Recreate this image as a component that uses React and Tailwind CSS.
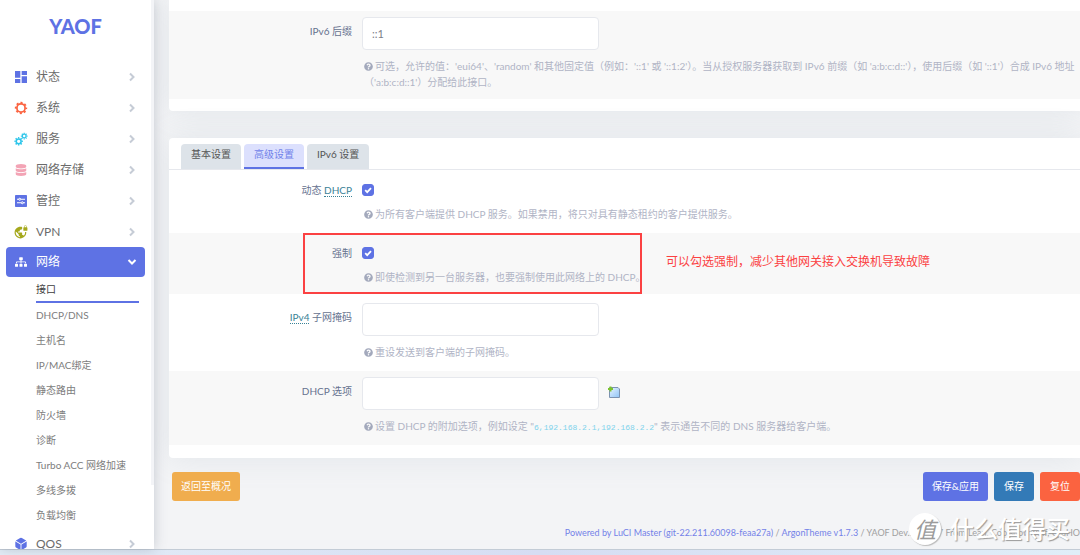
import React, { useState } from 'react';
import { MdDashboard, MdVpnLock } from 'react-icons/md';
import { FaDatabase, FaQuestionCircle, FaSitemap } from 'react-icons/fa';
import { IoCube } from 'react-icons/io5';

const Gear = ({ cx, cy, r, width }) => (
  <>
    <circle cx={cx} cy={cy} r={r} fill="none" stroke="currentColor" strokeWidth={width} />
    <circle
      cx={cx}
      cy={cy}
      r={r + width * 0.7}
      fill="none"
      stroke="currentColor"
      strokeWidth={width}
      pathLength="16"
      strokeDasharray="1 1"
      strokeDashoffset="0.5"
    />
  </>
);

const GearIcon = ({ className }) => (
  <svg viewBox="0 0 24 24" className={className} aria-hidden="true">
    <Gear cx={12} cy={12} r={7} width={3} />
  </svg>
);

const GearsIcon = ({ className }) => (
  <svg viewBox="0 0 24 24" className={className} aria-hidden="true">
    <Gear cx={8} cy={16} r={4.2} width={2.6} />
    <Gear cx={17.5} cy={7} r={3.2} width={2.2} />
  </svg>
);

const ControlIcon = ({ className }) => (
  <svg viewBox="0 0 24 24" className={className} aria-hidden="true">
    <rect width="24" height="24" rx="1.5" fill="currentColor" />
    <path d="M4 8.5h4M12 8.5h8M4 15.5h8M16 15.5h4" stroke="#fff" strokeWidth="2" />
    <circle cx="9.5" cy="8.5" r="2" fill="none" stroke="#fff" strokeWidth="2" />
    <circle cx="14.5" cy="15.5" r="2" fill="none" stroke="#fff" strokeWidth="2" />
  </svg>
);

const Chevron = ({ className }) => (
  <svg viewBox="0 0 10 10" className={`size-[10px] shrink-0 ${className}`} aria-hidden="true">
    <path d="M3 1.5L6.5 5L3 8.5" fill="none" stroke="currentColor" strokeWidth="2" />
  </svg>
);

const AddFileIcon = () => (
  <svg viewBox="0 0 12 12" className="size-3" aria-hidden="true">
    <defs>
      <linearGradient id="sheet" x1="0" y1="0" x2="1" y2="1">
        <stop offset="0" stopColor="#e8f4ff" />
        <stop offset="1" stopColor="#8fc3f5" />
      </linearGradient>
    </defs>
    <path d="M1.5 1.5H10L11.5 3V11.5H1.5Z" fill="url(#sheet)" stroke="#7c92b0" />
    <path d="M0 3H5M2.5 .5V5.5" stroke="#7cc32e" strokeWidth="2" />
  </svg>
);

const menu = [
  { label: '状态', icon: MdDashboard, color: 'text-[#5e72e4]', size: 'size-4' },
  { label: '系统', icon: GearIcon, color: 'text-[#fb6340]', size: 'size-[14px]' },
  { label: '服务', icon: GearsIcon, color: 'text-[#2dc5ea]', size: 'size-[14px]' },
  { label: '网络存储', icon: FaDatabase, color: 'text-[#f3a4b5]', size: 'size-3' },
  { label: '管控', icon: ControlIcon, color: 'text-[#5e72e4]', size: 'size-3' },
  { label: 'VPN', icon: MdVpnLock, color: 'text-[#a5a81c]', size: 'size-[14px]' },
];

const submenu = ['接口', 'DHCP/DNS', '主机名', 'IP/MAC绑定', '静态路由', '防火墙', '诊断', 'Turbo ACC 网络加速', '多线多拨', '负载均衡'];

const tabs = ['基本设置', '高级设置', 'IPv6 设置'];

const MenuItem = ({ item }) => {
  const Icon = item.icon;
  return (
    <a href="#" className="flex h-[31px] items-center px-2 text-[#6b6b6b]">
      <span className={`flex w-[14px] justify-center ${item.color}`}>
        <Icon className={`shrink-0 ${item.size}`} />
      </span>
      <span className="ml-2 flex-1 text-xs">{item.label}</span>
      <Chevron className="text-[#c6ccd6]" />
    </a>
  );
};

const Sidebar = () => (
  <aside className="relative z-10 flex w-[154px] shrink-0 overflow-hidden bg-white shadow-[0_0_12px_rgba(90,100,120,0.3)]">
    <nav className="min-w-0 flex-1 px-[6px]">
      <a href="#" className="flex h-[61px] items-center justify-center pb-[10px] font-['Lato'] text-[20px] font-black text-[#5e72e4]">
        YAOF
      </a>
      {menu.map((item) => (
        <MenuItem key={item.label} item={item} />
      ))}
      <a href="#" className="flex h-[30px] items-center rounded-[4px] bg-[#5e72e4] px-2 text-white">
        <span className="flex w-[14px] justify-center">
          <FaSitemap className="size-3" />
        </span>
        <span className="ml-2 flex-1 text-xs">网络</span>
        <Chevron className="rotate-90" />
      </a>
      <ul className="pr-[6px] pl-[30px] text-[10px]">
        {submenu.map((name, i) => (
          <li key={name}>
            {i === 0 ? (
              <a href="#" className="flex h-[26px] items-center border-b-2 border-[#5e72e4] whitespace-nowrap text-[#3d3d3d]">{name}</a>
            ) : (
              <a href="#" className="flex h-[25px] items-center whitespace-nowrap text-[#7d7d7d]">{name}</a>
            )}
          </li>
        ))}
      </ul>
      <MenuItem item={{ label: 'QOS', icon: IoCube, color: 'text-[#5e72e4]', size: 'size-[14px]' }} />
    </nav>
    <div className="mb-16 w-[3px] bg-[#f3f4f7]" />
  </aside>
);

const Row = ({ label, htmlFor, help, striped, check, overlay, children }) => (
  <div className={`relative flex ${striped ? 'bg-[#f8f8f8] pb-[9px]' : 'pb-[11px]'} ${!striped && !check ? 'pt-[3px]' : ''}`}>
    <label htmlFor={htmlFor} className="mt-3 w-[183px] shrink-0 text-right text-[10px] leading-4 text-[#66728f]">
      {label}
    </label>
    <div className={`ml-[10px] min-w-0 flex-1 ${check ? 'pt-[14px]' : 'pt-[6px]'}`}>
      {children}
      <p className={`pl-[2px] text-[10px] leading-4 text-[#b0b4c5] ${check ? 'mt-[10px]' : 'mt-2'}`}>
        <FaQuestionCircle className="mr-[2px] inline size-[9px] -translate-y-px text-[#a3a9bc]" />
        {help}
      </p>
    </div>
    {overlay}
  </div>
);

const TextField = ({ id, value }) => (
  <input
    id={id}
    type="text"
    defaultValue={value}
    className="h-[33px] w-[237px] rounded-[4px] border border-[#e6e8ed] bg-white px-[9px] text-[11px] text-[#7c8089]"
  />
);

const CheckField = ({ id }) => (
  <span className="relative flex size-3">
    <input
      id={id}
      type="checkbox"
      defaultChecked
      className="peer size-3 appearance-none rounded-[3px] border border-[#5e72e4] checked:bg-[#5e72e4]"
    />
    <svg viewBox="0 0 12 12" className="pointer-events-none absolute inset-0 size-3 opacity-0 peer-checked:opacity-100" aria-hidden="true">
      <path d="M3.2 6.2L5.2 8.2L9 4.2" fill="none" stroke="#fff" strokeWidth="1.8" />
    </svg>
  </span>
);

const Abbr = ({ children }) => (
  <span className="border-b border-dotted border-[#3a8296] text-[#3a8296]">{children}</span>
);

const Annotation = () => (
  <div className="pointer-events-none absolute inset-y-0 left-[134px] flex items-center">
    <div className="h-full w-[339px] border-2 border-[#fb4142]" />
    <span className="ml-6 pb-1 text-xs whitespace-nowrap text-[#fb4142]">可以勾选强制，减少其他网关接入交换机导致故障</span>
  </div>
);

const Watermark = () => (
  <div className="pointer-events-none absolute right-[10px] bottom-[10px] z-20 flex items-center gap-[9px] text-white">
    <span className="flex size-8 items-center justify-center rounded-full bg-white text-[22px] text-[#9b9b9b] italic shadow-[1px_1px_1px_#bbbbbb]">值</span>
    <span className="text-2xl leading-8 font-medium [text-shadow:1px_1px_1px_#999999]">什么值得买</span>
  </div>
);

const App = () => {
  const [tab, setTab] = useState('高级设置');

  return (
    <div className="relative flex h-screen flex-col overflow-hidden bg-[#f3f4f6] font-['Lato','Noto_Sans_CJK_SC',sans-serif]">
      <div className="flex min-h-0 flex-1">
        <Sidebar />
        <main className="min-w-0 flex-1 overflow-hidden pl-[15px]">
          <section className="rounded-bl-[4px] bg-white pt-[11px] pb-3 shadow-[0_0_32px_rgba(136,152,170,0.15)]">
            <Row
              label="IPv6 后缀"
              htmlFor="suffix"
              striped
              help="可选，允许的值：'eui64'、'random' 和其他固定值（例如：'::1' 或 '::1:2'）。当从授权服务器获取到 IPv6 前缀（如 'a:b:c:d::'），使用后缀（如 '::1'）合成 IPv6 地址（'a:b:c:d::1'）分配给此接口。"
            >
              <TextField id="suffix" value="::1" />
            </Row>
          </section>

          <section className="mt-[27px] rounded-l-[4px] bg-white pt-[6px] pb-[13px] shadow-[0_0_32px_rgba(136,152,170,0.15)]">
            <div role="tablist" className="flex gap-[3px] border-b border-[#e6e8ed] pl-3">
              {tabs.map((name) => (
                <button
                  key={name}
                  type="button"
                  role="tab"
                  aria-selected={tab === name}
                  onClick={() => setTab(name)}
                  className={`h-[25px] rounded-t-[4px] border-b-2 px-[10px] pb-[2px] text-[10px] ${
                    tab === name ? 'border-[#5e72e4] bg-[#dce0fd] text-[#7182ea]' : 'border-[#dde3e9] bg-[#dde3e9] text-[#555555]'
                  }`}
                >
                  {name}
                </button>
              ))}
            </div>
            <Row
              label={<>动态 <Abbr>DHCP</Abbr></>}
              htmlFor="dynamic"
              check
              help="为所有客户端提供 DHCP 服务。如果禁用，将只对具有静态租约的客户提供服务。"
            >
              <CheckField id="dynamic" />
            </Row>
            <Row
              label="强制"
              htmlFor="force"
              check
              striped
              overlay={<Annotation />}
              help="即使检测到另一台服务器，也要强制使用此网络上的 DHCP。"
            >
              <CheckField id="force" />
            </Row>
            <Row label={<><Abbr>IPv4</Abbr> 子网掩码</>} htmlFor="netmask" help="重设发送到客户端的子网掩码。">
              <TextField id="netmask" />
            </Row>
            <Row
              label="DHCP 选项"
              htmlFor="options"
              striped
              help={
                <>
                  设置 DHCP 的附加选项，例如设定 "
                  <code className="font-['Liberation_Mono',monospace] text-[8px] text-[#7fd3ec]">6,192.168.2.1,192.168.2.2</code>
                  " 表示通告不同的 DNS 服务器给客户端。
                </>
              }
            >
              <div className="flex items-center gap-[9px]">
                <TextField id="options" />
                <button type="button" aria-label="添加" className="-mt-1">
                  <AddFileIcon />
                </button>
              </div>
            </Row>
          </section>

          <div className="mt-[14px] flex gap-[6px] pl-[3px] text-[10px] text-white">
            <button type="button" className="mr-auto h-[29px] rounded-[3px] bg-[#f0ad4e] px-[9px]">返回至概况</button>
            <button type="button" className="h-[29px] rounded-[3px] bg-[#5e72e4] px-[9px]">保存&amp;应用</button>
            <button type="button" className="h-[29px] rounded-[3px] bg-[#337ab7] px-[10px]">保存</button>
            <button type="button" className="h-[29px] rounded-[3px] bg-[#fb6340] px-[10px]">复位</button>
          </div>

          <footer className="mt-6 flex justify-end text-[9px] leading-4 whitespace-nowrap text-[#a0a0a0]">
            <p>
              <a href="#" className="text-[#7382e8]">Powered by LuCI Master (git-22.211.60098-feaa27a)</a> /{' '}
              <a href="#" className="text-[#7382e8]">ArgonTheme v1.7.3</a> / YAOF Dev.2022.07 From Lean, Coolsnowwolf, QiuHO
            </p>
          </footer>
        </main>
      </div>
      <div className="h-[6px] shrink-0 border-t border-[#c3ccd6] bg-linear-to-r from-[#e4eef7] via-[#d6ddf3] to-[#e0eef8]" />
      <Watermark />
    </div>
  );
};

export default App;
